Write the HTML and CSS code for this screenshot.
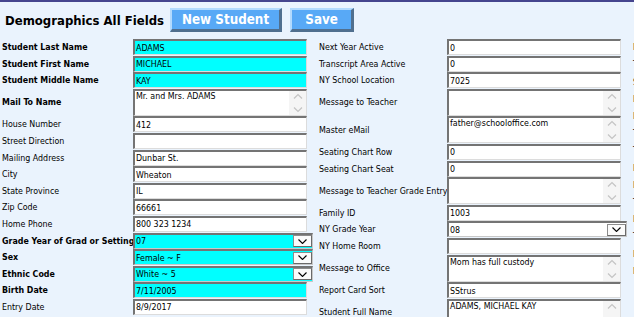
FILE: index.html
```html
<!DOCTYPE html>
<html>
<head>
<meta charset="utf-8">
<title>Demographics All Fields</title>
<link rel="stylesheet" href="styles.css">
</head>
<body>
<div class="page">
  <div class="header">
    <span class="title">Demographics All Fields</span>
    <span class="btn">New Student</span>
    <span class="btn btn-save">Save</span>
  </div>
  <div class="form">
    <div class="col col1">
      <div class="lbl b">Student Last Name</div><div class="fld req">ADAMS</div>
      <div class="lbl b">Student First Name</div><div class="fld req">MICHAEL</div>
      <div class="lbl b">Student Middle Name</div><div class="fld req">KAY</div>
      <div class="lbl b">Mail To Name</div>
      <div class="ta"><span class="txt">Mr. and Mrs. ADAMS</span><span class="sb"><svg width="10" height="6" viewBox="0 0 10 6"><path d="M1 5.5L5 1.5L9 5.5" fill="none" stroke="#c4c4c4" stroke-width="1.2"/></svg><svg width="10" height="6" viewBox="0 0 10 6"><path d="M1 0.5L5 4.5L9 0.5" fill="none" stroke="#c4c4c4" stroke-width="1.2"/></svg></span></div>
      <div class="lbl">House Number</div><div class="fld">412</div>
      <div class="lbl">Street Direction</div><div class="fld"></div>
      <div class="lbl">Mailing Address</div><div class="fld">Dunbar St.</div>
      <div class="lbl">City</div><div class="fld">Wheaton</div>
      <div class="lbl">State Province</div><div class="fld">IL</div>
      <div class="lbl">Zip Code</div><div class="fld">66661</div>
      <div class="lbl">Home Phone</div><div class="fld">800 323 1234</div>
      <div class="lbl b">Grade Year of Grad or Setting</div>
      <div class="sel req"><span class="val">07</span><span class="dd"><svg width="9" height="5" viewBox="0 0 9 5"><path d="M0.5 0.5L4.5 4.5L8.5 0.5" fill="none" stroke="#000" stroke-width="1.1"/></svg></span></div>
      <div class="lbl b">Sex</div>
      <div class="sel req"><span class="val">Female ~ F</span><span class="dd"><svg width="9" height="5" viewBox="0 0 9 5"><path d="M0.5 0.5L4.5 4.5L8.5 0.5" fill="none" stroke="#000" stroke-width="1.1"/></svg></span></div>
      <div class="lbl b">Ethnic Code</div>
      <div class="sel req"><span class="val">White ~ 5</span><span class="dd"><svg width="9" height="5" viewBox="0 0 9 5"><path d="M0.5 0.5L4.5 4.5L8.5 0.5" fill="none" stroke="#000" stroke-width="1.1"/></svg></span></div>
      <div class="lbl b">Birth Date</div><div class="fld req">7/11/2005</div>
      <div class="lbl">Entry Date</div><div class="fld">8/9/2017</div>
    </div>
    <div class="col col2">
      <div class="lbl">Next Year Active</div><div class="fld">0</div>
      <div class="lbl">Transcript Area Active</div><div class="fld">0</div>
      <div class="lbl">NY School Location</div><div class="fld">7025</div>
      <div class="lbl">Message to Teacher</div>
      <div class="ta"><span class="txt"></span><span class="sb"><svg width="10" height="6" viewBox="0 0 10 6"><path d="M1 5.5L5 1.5L9 5.5" fill="none" stroke="#c4c4c4" stroke-width="1.2"/></svg><svg width="10" height="6" viewBox="0 0 10 6"><path d="M1 0.5L5 4.5L9 0.5" fill="none" stroke="#c4c4c4" stroke-width="1.2"/></svg></span></div>
      <div class="lbl">Master eMail</div>
      <div class="ta"><span class="txt">father@schooloffice.com</span><span class="sb"><svg width="10" height="6" viewBox="0 0 10 6"><path d="M1 5.5L5 1.5L9 5.5" fill="none" stroke="#c4c4c4" stroke-width="1.2"/></svg><svg width="10" height="6" viewBox="0 0 10 6"><path d="M1 0.5L5 4.5L9 0.5" fill="none" stroke="#c4c4c4" stroke-width="1.2"/></svg></span></div>
      <div class="lbl">Seating Chart Row</div><div class="fld">0</div>
      <div class="lbl">Seating Chart Seat</div><div class="fld">0</div>
      <div class="lbl">Message to Teacher Grade Entry</div>
      <div class="ta"><span class="txt"></span><span class="sb"><svg width="10" height="6" viewBox="0 0 10 6"><path d="M1 5.5L5 1.5L9 5.5" fill="none" stroke="#c4c4c4" stroke-width="1.2"/></svg><svg width="10" height="6" viewBox="0 0 10 6"><path d="M1 0.5L5 4.5L9 0.5" fill="none" stroke="#c4c4c4" stroke-width="1.2"/></svg></span></div>
      <div class="lbl">Family ID</div><div class="fld">1003</div>
      <div class="lbl">NY Grade Year</div>
      <div class="sel"><span class="val">08</span><span class="dd"><svg width="9" height="5" viewBox="0 0 9 5"><path d="M0.5 0.5L4.5 4.5L8.5 0.5" fill="none" stroke="#000" stroke-width="1.1"/></svg></span></div>
      <div class="lbl">NY Home Room</div><div class="fld"></div>
      <div class="lbl">Message to Office</div>
      <div class="ta"><span class="txt">Mom has full custody</span><span class="sb"><svg width="10" height="6" viewBox="0 0 10 6"><path d="M1 5.5L5 1.5L9 5.5" fill="none" stroke="#c4c4c4" stroke-width="1.2"/></svg><svg width="10" height="6" viewBox="0 0 10 6"><path d="M1 0.5L5 4.5L9 0.5" fill="none" stroke="#c4c4c4" stroke-width="1.2"/></svg></span></div>
      <div class="lbl">Report Card Sort</div><div class="fld">SStrus</div>
      <div class="lbl">Student Full Name</div>
      <div class="ta"><span class="txt">ADAMS, MICHAEL KAY</span><span class="sb"><svg width="10" height="6" viewBox="0 0 10 6"><path d="M1 5.5L5 1.5L9 5.5" fill="none" stroke="#c4c4c4" stroke-width="1.2"/></svg><svg width="10" height="6" viewBox="0 0 10 6"><path d="M1 0.5L5 4.5L9 0.5" fill="none" stroke="#c4c4c4" stroke-width="1.2"/></svg></span></div>
    </div>
    <div class="col col3">
      <div class="lbl">Nickname</div>
      <div class="lbl">Transportation</div>
      <div class="lbl">School Code</div>
      <div class="lbl">Lunch Code</div>
      <div class="lbl">Locker Number</div>
      <div class="lbl">Title I</div>
      <div class="lbl">Tuition Code</div>
      <div class="lbl">Program</div>
      <div class="lbl">Language</div>
      <div class="lbl">Transfer</div>
      <div class="lbl">Last School</div>
      <div class="lbl">Teacher</div>
      <div class="lbl">District</div>
      <div class="lbl">Notes</div>
    </div>
  </div>
</div>
</body>
</html>
```
FILE: styles.css
```css
html, body {
  margin: 0;
  padding: 0;
  height: 100%;
  overflow: hidden;
}
body {
  background: #eaf3fd;
  font-family: "DejaVu Sans Condensed", "DejaVu Sans", sans-serif;
  font-stretch: condensed;
  font-size: 8.8px;
  color: #000;
}
.page {
  border-top: 2px solid #45458e;
  width: 900px;
}
.header {
  display: flex;
  align-items: center;
  gap: 8px;
  height: 24px;
  margin: 6px 0 7px 5px;
}
.title {
  font-size: 13px;
  font-weight: bold;
  margin-right: -2px;
  white-space: nowrap;
}
.btn {
  box-sizing: border-box;
  height: 24px;
  display: flex;
  align-items: center;
  justify-content: center;
  padding: 0 10px 0 10px;
  background: #58a9f6;
  color: #fff;
  font-size: 13.3px;
  font-weight: bold;
  border-top: 2px solid #b3dafd;
  border-left: 2px solid #b3dafd;
  border-right: 3px solid #506f8e;
  border-bottom: 3px solid #506f8e;
  white-space: nowrap;
}
.btn-save {
  min-width: 64px;
}
.form {
  display: flex;
  align-items: flex-start;
  gap: 6px;
  padding-left: 2px;
}
.col {
  flex: none;
  display: grid;
  grid-template-columns: 131px 180px;
  row-gap: 0.6px;
}
.col2 {
  grid-template-columns: 128px 180px;
}
.col3 {
  grid-template-columns: 120px;
  row-gap: 0.6px;
}
.col3 .lbl {
  height: 16.6px;
}
.lbl {
  display: flex;
  align-items: center;
  white-space: nowrap;
}
.b {
  font-weight: bold;
}
.fld, .ta, .sel {
  box-sizing: border-box;
  background: #fff;
  border-top: 2px solid #747474;
  border-left: 2px solid #747474;
  border-right: 1px solid #dcdcdc;
  border-bottom: 1px solid #dcdcdc;
}
.fld {
  width: 174px;
  height: 16px;
  display: flex;
  align-items: center;
  padding: 0 1px;
  white-space: nowrap;
  overflow: hidden;
}
.req {
  background: #00ffff;
}
.ta {
  width: 174px;
  height: 27px;
  display: flex;
}
.ta .txt {
  flex: 1;
  padding: 0 1px;
  line-height: 11px;
  white-space: nowrap;
  overflow: hidden;
}
.ta .sb {
  width: 17px;
  background: #f5f5f5;
  display: flex;
  flex-direction: column;
  justify-content: space-between;
  align-items: center;
  padding: 2px 0 2px 0;
}
.ta .sb svg {
  display: block;
}
.sel {
  width: 180px;
  height: 16px;
  display: flex;
  align-items: center;
  border-right: 1px solid #c8c8c8;
  border-bottom: 1px solid #c8c8c8;
}
.sel .val {
  flex: 1;
  padding-left: 1px;
  white-space: nowrap;
}
.sel .dd {
  box-sizing: border-box;
  width: 19px;
  height: 12px;
  margin-right: 0;
  background: #fbfbfb;
  border: 1px solid #8c8c8c;
  border-right-color: #6a6a6a;
  border-bottom-color: #6a6a6a;
  display: flex;
  align-items: center;
  justify-content: center;
}
.sel .dd svg {
  display: block;
}
```
